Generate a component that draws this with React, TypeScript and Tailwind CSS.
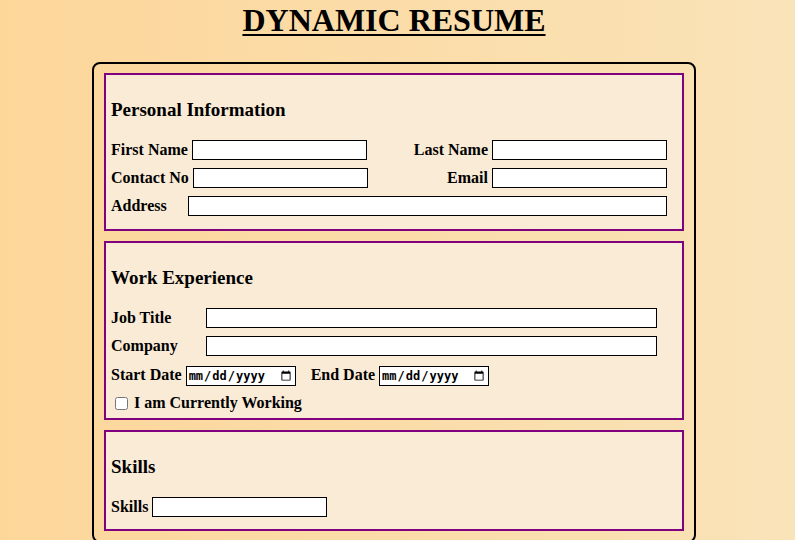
import React from "react";

const serif = "font-['Liberation_Serif','Times_New_Roman',serif]";

function TextBox({ w }: { w: string }) {
  return (
    <input
      type="text"
      className={`${w} h-5 border border-black bg-white px-0.5 text-[13px] outline-none`}
    />
  );
}

function DateBox() {
  return (
    <input
      type="date"
      className="w-[110px] h-5 border border-black bg-white px-px text-[12px] font-['DejaVu_Sans_Mono',monospace] text-black outline-none"
    />
  );
}

function Section({
  title,
  pb,
  children,
}: {
  title: string;
  pb: string;
  children: React.ReactNode;
}) {
  return (
    <section className={`border-2 border-[#800080] bg-[#faebd7] pt-[5px] px-[5px] ${pb}`}>
      <h3 className="mt-[19px] mb-[19px] text-[19px] leading-[22px] font-bold">{title}</h3>
      {children}
    </section>
  );
}

export default function App() {
  return (
    <div
      className={`min-h-screen w-full bg-[linear-gradient(to_right,#fdd69a,#f9e3b8)] ${serif} text-black`}
    >
      <div className="flex flex-col items-center pr-[7px]">
        <h1 className="mt-[2px] text-[32px] leading-[36px] font-bold underline underline-offset-[3px] decoration-2">
          DYNAMIC RESUME
        </h1>

        <div className="mt-6 w-[604px] rounded-lg border-2 border-black px-[10px] pt-[9px] pb-[10px] flex flex-col gap-[10px] text-[16px] font-bold">
          <Section title="Personal Information" pb="pb-[13px]">
            <div className="flex flex-col gap-2 pr-[10px]">
              <div className="flex h-5 items-center justify-between">
                <div className="flex items-center gap-1">
                  <span>First Name</span>
                  <TextBox w="w-[175px]" />
                </div>
                <div className="flex items-center gap-1">
                  <span>Last Name</span>
                  <TextBox w="w-[175px]" />
                </div>
              </div>
              <div className="flex h-5 items-center justify-between">
                <div className="flex items-center gap-1">
                  <span>Contact No</span>
                  <TextBox w="w-[175px]" />
                </div>
                <div className="flex items-center gap-1">
                  <span>Email</span>
                  <TextBox w="w-[175px]" />
                </div>
              </div>
              <div className="flex h-5 items-center">
                <span className="w-[77px]">Address</span>
                <TextBox w="w-[479px]" />
              </div>
            </div>
          </Section>

          <Section title="Work Experience" pb="pb-[5px]">
            <div className="flex flex-col gap-2">
              <div className="flex h-5 items-center">
                <span className="w-[95px]">Job Title</span>
                <TextBox w="w-[451px]" />
              </div>
              <div className="flex h-5 items-center">
                <span className="w-[95px]">Company</span>
                <TextBox w="w-[451px]" />
              </div>
              <div className="mt-px flex h-5 items-center">
                <span>Start Date</span>
                <span className="ml-1">
                  <DateBox />
                </span>
                <span className="ml-[15px]">End Date</span>
                <span className="ml-1">
                  <DateBox />
                </span>
              </div>
              <label className="flex h-5 items-center">
                <input type="checkbox" className="ml-1 mr-[6px] h-[13px] w-[13px]" />
                <span>I am Currently Working</span>
              </label>
            </div>
          </Section>

          <Section title="Skills" pb="pb-[12px]">
            <div className="flex h-5 items-center gap-1">
              <span>Skills</span>
              <TextBox w="w-[175px]" />
            </div>
          </Section>
        </div>
      </div>
    </div>
  );
}
